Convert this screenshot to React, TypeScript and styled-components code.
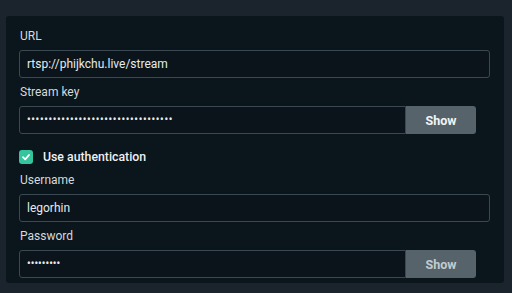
import React from "react";
import styled, { createGlobalStyle } from "styled-components";

const Global = createGlobalStyle`
  html, body { margin: 0; padding: 0; background: #1b242c; }
  body { font-family: Roboto, "Noto Sans", "Liberation Sans", sans-serif; -webkit-font-smoothing: antialiased; }
  * { box-sizing: border-box; }
`;

const Page = styled.div`
  width: 512px;
  height: 293px;
  padding: 16px 8px 10px 6px;
  background: #1b242c;
`;

const Panel = styled.div`
  height: 267px;
  background: #0b151c;
  border-radius: 3px;
  padding: 6px 14px 0 13px;
  display: flex;
  flex-direction: column;
`;

const Label = styled.div`
  color: #d4dadd;
  font-size: 12px;
  line-height: 14px;
  height: 28px;
  padding-top: 7px;
  margin-left: 1px;
`;

const Row = styled.div`
  display: flex;
  align-items: stretch;
  height: 28px;
  flex-shrink: 0;
`;

const Input = styled.div<{ $joined?: boolean }>`
  flex: 1;
  height: 28px;
  border: 1px solid #3a4852;
  border-radius: ${(p) => (p.$joined ? "3px 0 0 3px" : "3px")};
  background: #0a141a;
  color: #e6eaec;
  font-size: 12px;
  display: flex;
  align-items: center;
  padding-left: 7px;
`;

const Dots = styled.span<{ $spacing: number }>`
  font-size: 10px;
  font-weight: 700;
  letter-spacing: ${(p) => p.$spacing}px;
  color: #e6eaec;
  margin-top: -1px;
`;

const Button = styled.button<{ $muted?: boolean }>`
  width: 70px;
  height: 28px;
  border: none;
  border-radius: 0 3px 3px 0;
  background: #56636a;
  color: ${(p) => (p.$muted ? "#c3cbcf" : "#f2f4f5")};
  font-family: inherit;
  font-size: 12.5px;
  font-weight: 700;
  padding: 0;
`;

const Spacer = styled.div`
  width: 14px;
`;

const CheckRow = styled.div`
  display: flex;
  align-items: center;
  height: 32px;
  padding-top: 14px;
  gap: 10px;
  flex-shrink: 0;
`;

const Box = styled.span`
  width: 14px;
  height: 14px;
  border-radius: 3px;
  background: #35c49d;
  display: inline-flex;
  align-items: center;
  justify-content: center;
`;

const CheckLabel = styled.span`
  color: #eef1f2;
  font-size: 12.3px;
  font-weight: 500;
`;

export default function App() {
  return (
    <>
      <Global />
      <Page>
        <Panel>
          <Label>URL</Label>
          <Row>
            <Input>rtsp://phijkchu.live/stream</Input>
          </Row>
          <Label>Stream key</Label>
          <Row>
            <Input $joined>
              <Dots $spacing={0.7}>{"•".repeat(34)}</Dots>
            </Input>
            <Button>Show</Button>
            <Spacer />
          </Row>
          <CheckRow>
            <Box>
              <svg width="10" height="10" viewBox="0 0 10 10">
                <path d="M2 5.2 L4.2 7.3 L8 3" fill="none" stroke="#fff" strokeWidth="1.8" strokeLinecap="round" strokeLinejoin="round" />
              </svg>
            </Box>
            <CheckLabel>Use authentication</CheckLabel>
          </CheckRow>
          <Label>Username</Label>
          <Row>
            <Input>legorhin</Input>
          </Row>
          <Label>Password</Label>
          <Row>
            <Input $joined>
              <Dots $spacing={0.1}>{"•".repeat(9)}</Dots>
            </Input>
            <Button $muted>Show</Button>
            <Spacer />
          </Row>
        </Panel>
      </Page>
    </>
  );
}
